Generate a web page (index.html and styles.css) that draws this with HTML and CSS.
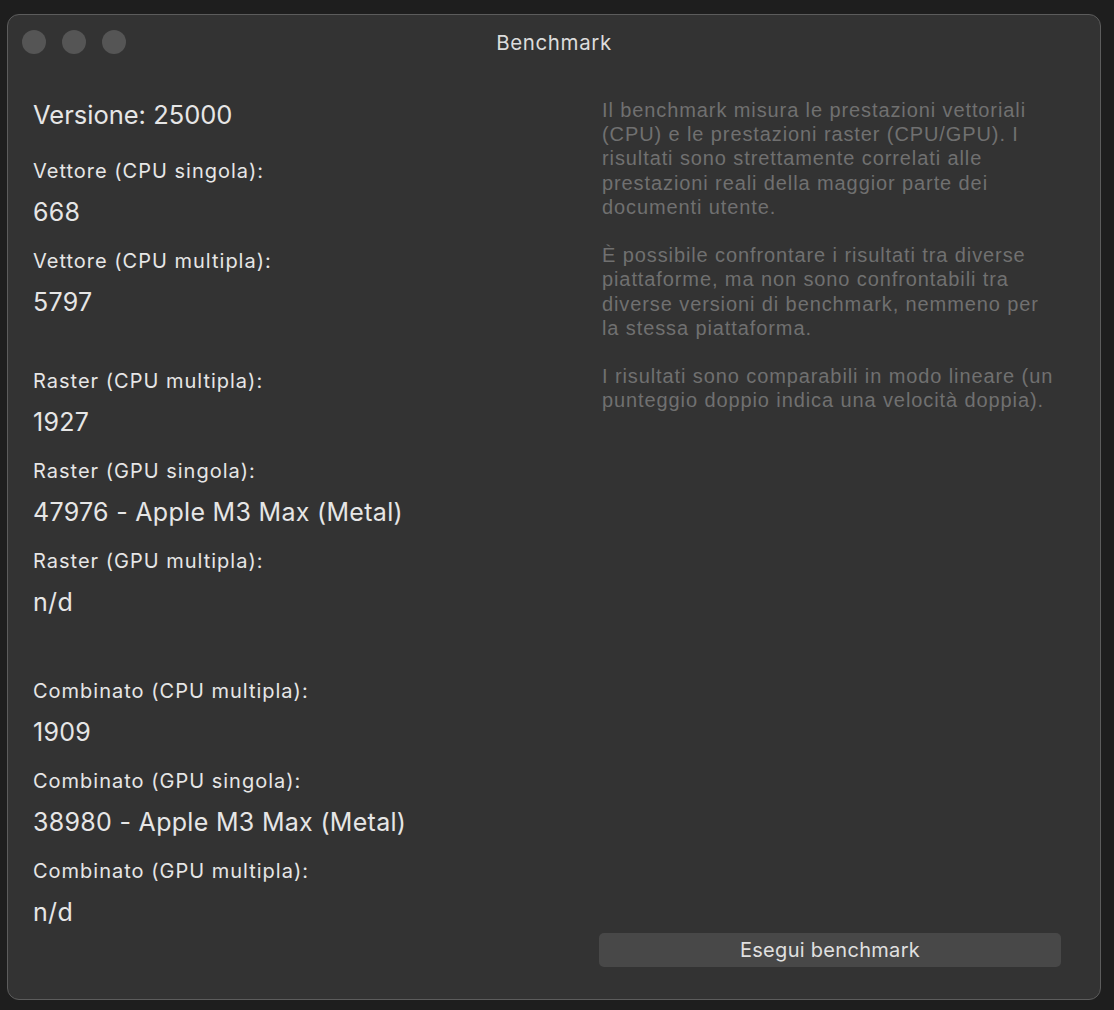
FILE: index.html
```html
<!DOCTYPE html>
<html lang="it">
<head>
    <meta charset="UTF-8">
    <meta name="viewport" content="width=device-width, initial-scale=1.0">
    <title>Benchmark</title>
    <link rel="stylesheet" href="styles.css">
</head>
<body>
    <div class="window">
        <div class="titlebar">
            <div class="lights">
                <span class="light"></span>
                <span class="light"></span>
                <span class="light"></span>
            </div>
            <div class="title">Benchmark</div>
        </div>

        <div class="content">
            <div class="results">
                <div class="version">Versione: 25000</div>

                <div class="group vector">
                    <div class="label">Vettore (CPU singola):</div>
                    <div class="value">668</div>
                    <div class="label">Vettore (CPU multipla):</div>
                    <div class="value">5797</div>
                </div>

                <div class="group raster">
                    <div class="label">Raster (CPU multipla):</div>
                    <div class="value">1927</div>
                    <div class="label">Raster (GPU singola):</div>
                    <div class="value">47976 - Apple M3 Max (Metal)</div>
                    <div class="label">Raster (GPU multipla):</div>
                    <div class="value">n/d</div>
                </div>

                <div class="group">
                    <div class="label">Combinato (CPU multipla):</div>
                    <div class="value">1909</div>
                    <div class="label">Combinato (GPU singola):</div>
                    <div class="value">38980 - Apple M3 Max (Metal)</div>
                    <div class="label">Combinato (GPU multipla):</div>
                    <div class="value">n/d</div>
                </div>
            </div>

            <div class="side">
                <div class="info">
                    <p>Il benchmark misura le prestazioni vettoriali (CPU) e le prestazioni raster (CPU/GPU). I risultati sono strettamente correlati alle prestazioni reali della maggior parte dei documenti utente.</p>
                    <p>È possibile confrontare i risultati tra diverse piattaforme, ma non sono confrontabili tra diverse versioni di benchmark, nemmeno per la stessa piattaforma.</p>
                    <p>I risultati sono comparabili in modo lineare (un punteggio doppio indica una velocità doppia).</p>
                </div>
                <button class="run">Esegui benchmark</button>
            </div>
        </div>
    </div>
</body>
</html>
```

FILE: styles.css
```css
html, body {
    margin: 0;
    padding: 0;
    background-color: #1e1e1e;
}

body {
    font-family: Inter, "Noto Sans", sans-serif;
    color: #e6e6e6;
    padding: 14px 13px 10px 7px;
}

.window {
    height: 986px;
    box-sizing: border-box;
    background-color: #333333;
    border: 1px solid #5c5c5c;
    border-radius: 12px;
    display: flex;
    flex-direction: column;
}

.titlebar {
    height: 54px;
    display: flex;
    align-items: center;
    position: relative;
}

.lights {
    display: flex;
    gap: 16px;
    padding-left: 14px;
}

.light {
    width: 24px;
    height: 24px;
    border-radius: 50%;
    background-color: #555555;
}

.title {
    position: absolute;
    left: 0;
    right: 0;
    top: 15px;
    text-align: center;
    font-size: 20.5px;
    letter-spacing: 0.6px;
    color: #dcdcdc;
}

.content {
    flex: 1;
    display: grid;
    grid-template-columns: 566px 1fr;
    padding: 0 39px 32px 25px;
}

.version {
    font-size: 25.5px;
    line-height: 40px;
    margin-top: 26px;
    margin-bottom: 16px;
}

.group.vector {
    margin-bottom: 38px;
}

.group.raster {
    margin-bottom: 48px;
}

.label {
    font-size: 20px;
    letter-spacing: 1px;
    line-height: 40px;
}

.value {
    font-size: 25px;
    letter-spacing: 0.3px;
    line-height: 42px;
    margin-bottom: 8px;
}

.side {
    display: flex;
    flex-direction: column;
    justify-content: space-between;
}

.info {
    font-family: "Liberation Sans", Arial, sans-serif;
    font-size: 20px;
    letter-spacing: 0.9px;
    line-height: 24.2px;
    color: #707070;
    margin-top: 29px;
    padding-left: 3px;
}

.info p {
    margin: 0 0 24.2px 0;
}

.run {
    height: 34px;
    width: 462px;
    border: none;
    border-radius: 5px;
    background-color: #484848;
    color: #e0e0e0;
    font-family: Inter, "Noto Sans", sans-serif;
    font-size: 20px;
    letter-spacing: 0.3px;
}
```
